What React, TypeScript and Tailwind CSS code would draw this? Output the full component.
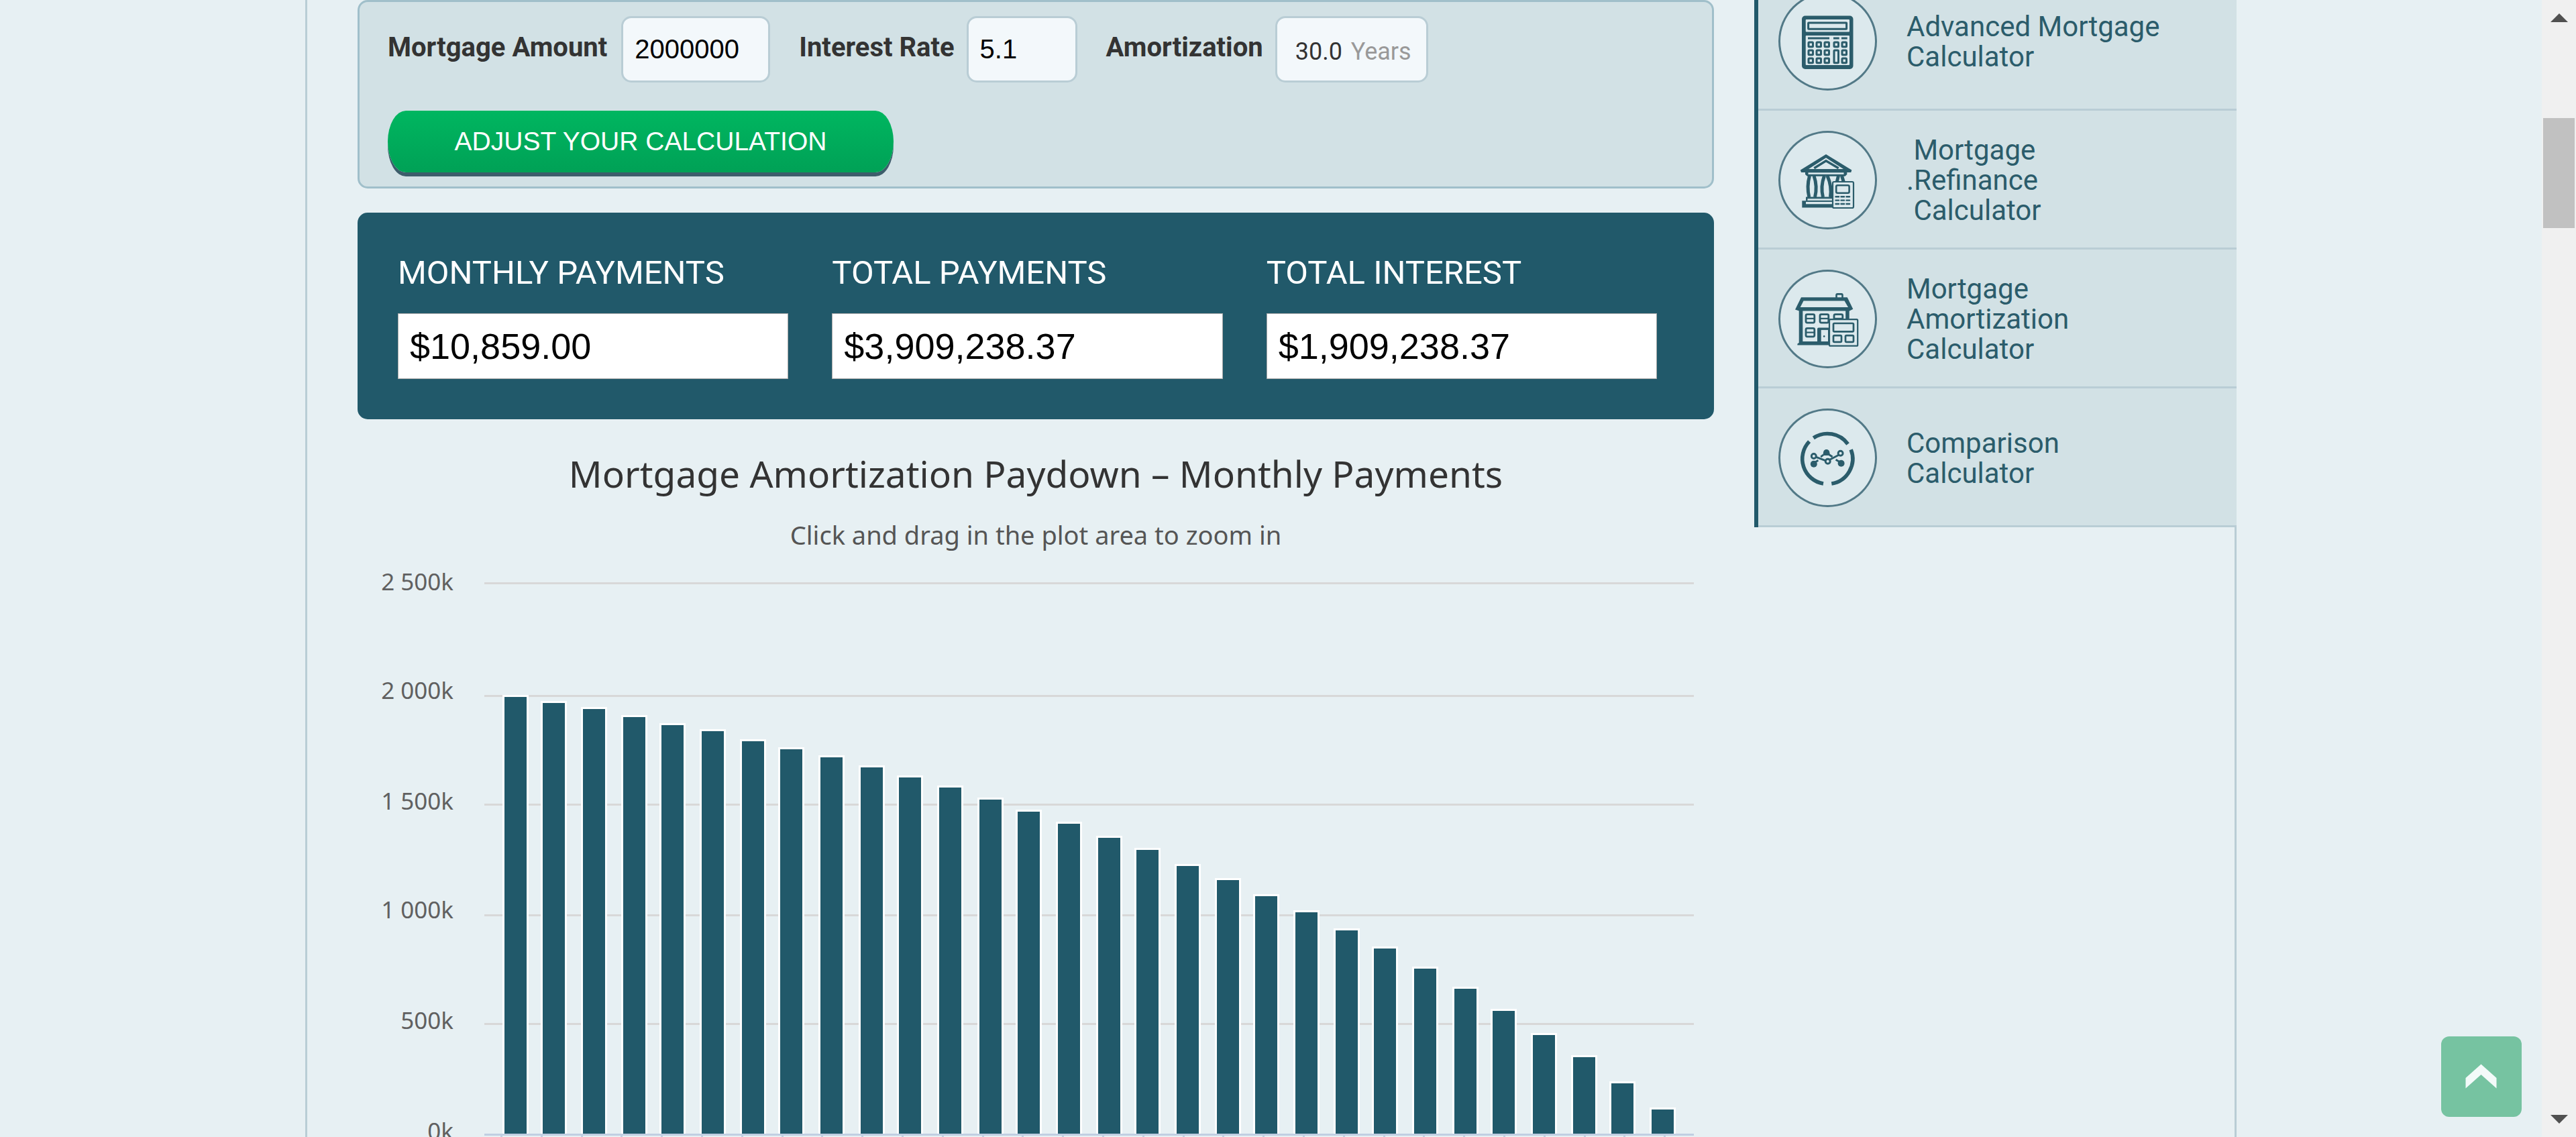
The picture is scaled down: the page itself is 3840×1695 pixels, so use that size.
import type { ReactNode } from "react";

const INK = "#2b5c6b";
const PAPER = "#dce9ed";

function CalculatorIcon() {
  const cols = [45, 57, 69, 83, 95];
  const rows = [75, 87, 99];
  return (
    <svg viewBox="0 0 147 147" className="h-full w-full" aria-hidden="true">
      <rect x="35" y="35.5" width="76.5" height="79.5" rx="5" fill={INK} />
      <rect x="40.7" y="41" width="65.3" height="18.5" rx="1" fill={PAPER} />
      <rect x="40.7" y="65" width="65.3" height="44" rx="1" fill={PAPER} />
      <g fill="none" stroke={INK} strokeWidth="3">
        <rect x="44.6" y="46" width="57" height="9.3" rx="0.5" />
        <path d="M44 69h32M82 69h8.7M94 69h8.7" strokeWidth="2.8" />
        {rows.map((y, r) =>
          cols.map((x, c) =>
            c === 3 && r > 0 ? null : <rect key={`${x}-${y}`} x={x} y={y} width="6.5" height="6.8" rx="1" />,
          ),
        )}
        <rect x="83" y="87" width="6.5" height="18.8" rx="1" />
      </g>
    </svg>
  );
}

function BankIcon() {
  return (
    <svg viewBox="0 0 147 147" className="h-full w-full" aria-hidden="true">
      <path d="M71 35 L109.3 58.6 L108.3 62 H34 L32.8 58.6 Z" fill={INK} />
      <path d="M71 40.3 L97 57 H45 Z" fill={PAPER} />
      <path d="M53.3 55.7 L71 44.8 L89.7 55.7" fill="none" stroke={INK} strokeWidth="3.4" />
      <path d="M40 62 H102.3 V65 L99.5 67.7 H43 L40 65 Z" fill={INK} />
      <rect x="44.5" y="62.3" width="53" height="2.6" fill={PAPER} />
      <g fill="none" stroke={INK} strokeWidth="5">
        <path d="M46.5 67 Q42 83 45.8 99" />
        <path d="M53 67 Q58.5 83 54.5 99" />
        <path d="M68.5 67 Q62.5 83 66.5 99" />
        <path d="M73 67 Q80 83 77.5 99" />
        <path d="M89.5 67 L87 77M94.5 67 L97.5 77" />
      </g>
      <path d="M41 98.5H82V104.5H41Z" fill={INK} />
      <path d="M43.5 101.2H82V103.8H43.5Z" fill={PAPER} />
      <path d="M35.3 104.3H82V114.6H35.3Z" fill={INK} />
      <path d="M41 106H82V109.3H41Z" fill={PAPER} />
      <rect x="81" y="76" width="31" height="39" rx="2" fill={PAPER} stroke={INK} strokeWidth="2.2" />
      <rect x="86.2" y="81.2" width="19.4" height="11.6" rx="2" fill="none" stroke={INK} strokeWidth="2.6" />
      <path
        d="M85.5 98.2h4.6M93.5 98.2h4.6M101.5 98.2h4.6M85.5 103.6h4.6M93.5 103.6h4.6M101.5 103.6h4.6M85.5 109h4.6M93.5 109h4.6M101.5 109h4.6"
        stroke={INK}
        strokeWidth="2.4"
        strokeLinecap="round"
      />
    </svg>
  );
}

function HouseIcon() {
  const windows = [
    [41, 66.7],
    [62, 66.7],
    [83, 66.7],
    [41, 87.4],
  ];
  return (
    <svg viewBox="0 0 147 147" className="h-full w-full" aria-hidden="true">
      <path d="M86.5 42V38q0-1.6 1.6-1.6h5.8q1.6 0 1.6 1.6V42" fill="none" stroke={INK} strokeWidth="2.6" />
      <path d="M34 41.2H102.7L111.3 58.7L106 61.6H31L25 59.4Z" fill={INK} />
      <path d="M37.5 46.6H98.5L104 56H32.7Z" fill={PAPER} />
      <path d="M30.7 61H36.3V107H78V112.6H28.4V110.5L30.7 109Z" fill={INK} />
      <path d="M100.2 61H105.7V76H100.2Z" fill={INK} />
      <g fill="none" stroke={INK} strokeWidth="2.8">
        {windows.map(([x, y]) => (
          <g key={`${x}-${y}`}>
            <rect x={x} y={y} width="12.8" height="12.4" rx="2" />
            <path d={`M${x} ${y + 6.2}h12.8`} strokeWidth="2.2" />
          </g>
        ))}
      </g>
      <path d="M58 108V88.5q0-2 2-2H76V108Z" fill={INK} />
      <path d="M63.7 107V89.9H74V107Z" fill={PAPER} />
      <circle cx="68.2" cy="99.4" r="1.3" fill={INK} />
      <rect x="76" y="74.2" width="42.2" height="39.5" rx="1.5" fill={PAPER} stroke={INK} strokeWidth="2.2" />
      <g fill="none" stroke={INK} strokeWidth="2.7">
        <rect x="82" y="80" width="30" height="12.3" rx="1.5" />
        <rect x="82" y="98.2" width="12" height="9.6" rx="1.5" />
        <rect x="100" y="98.2" width="12" height="9.6" rx="1.5" />
      </g>
    </svg>
  );
}

function ComparisonIcon() {
  return (
    <svg viewBox="0 0 147 147" className="h-full w-full" aria-hidden="true">
      <g fill="none" stroke={INK} strokeWidth="5.6">
        <path d="M79.3 112A37.5 37.5 0 0 0 108.2 61.3" />
        <path d="M103.6 53A37.5 37.5 0 0 0 52.3 43.9" />
        <path d="M46.1 49.1A37.5 37.5 0 0 0 67 112" />
      </g>
      <g fill={INK}>
        <path d="M71.7 61c3.4 0 4.6 2.4 4.8 5.6l.8 3.4h-11.2l.8-3.4c.2-3.2 1.400-5.600 4.800-5.600Z" />
        <circle cx="52.8" cy="82.7" r="5" />
        <circle cx="93.6" cy="81.7" r="5" />
      </g>
      <g fill="none" stroke={INK} strokeWidth="2.9">
        <path d="M67 69L63.2 72.2M76 69L80.6 72M54 80.5L59.4 77.2M92 80L85.6 76.2" />
        <path d="M56.3 72.3L70.2 77.7M76.6 76.2L90 69.3" />
        <circle cx="52.8" cy="71" r="3.5" />
        <circle cx="73.7" cy="78.7" r="3.5" />
        <circle cx="92.6" cy="66.7" r="3.5" />
      </g>
    </svg>
  );
}

const calculators: { label: string; icon: ReactNode }[] = [
  { label: "Advanced Mortgage\nCalculator", icon: <CalculatorIcon /> },
  { label: "\u00a0Mortgage\n.Refinance\n\u00a0Calculator", icon: <BankIcon /> },
  { label: "Mortgage\nAmortization\nCalculator", icon: <HouseIcon /> },
  { label: "Comparison\nCalculator", icon: <ComparisonIcon /> },
];

const results = [
  { id: "monthly", label: "MONTHLY PAYMENTS", value: "$10,859.00" },
  { id: "total", label: "TOTAL PAYMENTS", value: "$3,909,238.37" },
  { id: "interest", label: "TOTAL INTEREST", value: "$1,909,238.37" },
];

const gridLines = [
  { y: 47, text: 59, label: "2 500k" },
  { y: 215, text: 221, label: "2 000k" },
  { y: 377, text: 386, label: "1 500k" },
  { y: 542, text: 548, label: "1 000k" },
  { y: 704, text: 713, label: "500k" },
];

const AXIS_Y = 869;

const barTops = [
  215, 224, 233, 245, 257, 266, 281, 293, 305, 320, 335, 350, 368, 386, 404, 425, 443, 467, 488, 512, 536, 563, 590,
  620, 650, 683, 719, 752, 791, 830,
];

const barOffsets = [0, 57, 117];

function PaydownChart() {
  return (
    <svg
      viewBox="0 0 2022 920"
      className="block w-full font-['Noto_Sans',sans-serif]"
      role="img"
      aria-label="Remaining mortgage balance by year"
    >
      {gridLines.map((line) => (
        <g key={line.label}>
          <rect x="189" y={line.y} width="1803" height="3" fill="#d8d8d8" />
          <text x="143" y={line.text} fontSize="35" textAnchor="end" fill="#606060">
            {line.label}
          </text>
        </g>
      ))}
      <text x="143" y="878" fontSize="35" textAnchor="end" fill="#606060">
        0k
      </text>
      {barTops.map((top, i) => {
        const x = 216 + Math.floor(i / 3) * 177 + barOffsets[i % 3];
        return (
          <g key={i}>
            <rect x={x} y={top} width="39" height={AXIS_Y - top} fill="#ffffff" />
            <rect x={x + 3} y={top + 3} width="33" height={AXIS_Y - top - 3} fill="#21596a" />
          </g>
        );
      })}
      <rect x="189" y={AXIS_Y} width="1803" height="3" fill="#c0cfe2" />
      {barTops.map((_, i) => (
        <rect key={i} x={Math.round(213 + i * 59.8)} y={AXIS_Y + 3} width="3" height="15" fill="#c0cfe2" />
      ))}
    </svg>
  );
}

const fieldBox = "h-[99px] rounded-[15px] border-[3px] border-[#b9cdd5] bg-[#f3f8fb]";
const fieldLabel = "text-[40px] leading-[94px] font-bold text-[#333333]";

export default function App() {
  return (
    <div className="flex h-screen overflow-hidden bg-[#e7f0f3] font-[Roboto,sans-serif]">
      <div className="min-w-0 flex-1">
        <div className="mx-auto flex min-h-screen max-w-[2879px] gap-[60px] border-x-[3px] border-[#b9cdd5] pl-[75px]">
          <main className="min-w-0 flex-1">
            <form className="rounded-[15px] border-[3px] border-[#a0bfca] bg-[#d2e1e5] px-[42px] pt-[21px] pb-[21px]">
              <div className="flex flex-wrap gap-x-[43px]">
                <div className="flex gap-[21px]">
                  <label htmlFor="amount" className={fieldLabel}>
                    Mortgage Amount
                  </label>
                  <input
                    id="amount"
                    defaultValue="2000000"
                    className={`${fieldBox} w-[222px] px-[17px] font-['Liberation_Sans',sans-serif] text-[40px] text-black`}
                  />
                </div>
                <div className="flex gap-[18px]">
                  <label htmlFor="rate" className={fieldLabel}>
                    Interest Rate
                  </label>
                  <input
                    id="rate"
                    defaultValue="5.1"
                    className={`${fieldBox} w-[165px] px-[17px] font-['Liberation_Sans',sans-serif] text-[40px] text-black`}
                  />
                </div>
                <div className="flex gap-[18px]">
                  <label htmlFor="years" className={fieldLabel}>
                    Amortization
                  </label>
                  <div className={`${fieldBox} flex w-[228px] items-center pt-[6px] pl-[27px] text-[36px]`}>
                    <input id="years" defaultValue="30.0" className="w-[83px] text-[#333333]" />
                    <span className="text-[#999999]">Years</span>
                  </div>
                </div>
              </div>
              <button
                type="button"
                className="mt-[42px] block h-[92px] w-[754px] bg-linear-to-b from-[#00b660] to-[#00a156] font-['Liberation_Sans',sans-serif] text-[39px] text-white shadow-[0_6px_0_#3d5d6b] [border-radius:27px/46px]"
              >
                ADJUST YOUR CALCULATION
              </button>
            </form>

            <section className="mt-[36px] flex gap-[65px] rounded-[15px] bg-[#21596a] py-[60px] pr-[85px] pl-[60px]">
              {results.map((result) => (
                <div key={result.id} className="min-w-0 flex-1">
                  <label htmlFor={result.id} className="block text-[49px] leading-[60px] text-white">
                    {result.label}
                  </label>
                  <input
                    id={result.id}
                    readOnly
                    defaultValue={result.value}
                    className="mt-[30px] block h-[98px] w-full border border-[#a9a9a9] bg-white px-[17px] font-['Liberation_Sans',sans-serif] text-[54px] text-black"
                  />
                </div>
              ))}
            </section>

            <section className="pt-[51px] text-center font-['Noto_Sans',sans-serif]">
              <h2 className="text-[55px] leading-[60px] text-[#333333]">
                Mortgage Amortization Paydown – Monthly Payments
              </h2>
              <p className="mt-[37px] text-[38px] leading-[48px] text-[#555555]">
                Click and drag in the plot area to zoom in
              </p>
              <PaydownChart />
            </section>
          </main>

          <nav className="-mt-[42px] -mr-[3px] w-[719px] shrink-0 self-start border-l-[6px] border-[#21596a] bg-[#d2e1e5]">
            {calculators.map((item) => (
              <a
                key={item.label}
                href="#"
                className="flex h-[207px] items-start gap-[44px] border-b-[3px] border-[#b9cdd5] pt-[30px] pl-[30px]"
              >
                <span className="block size-[147px] shrink-0 rounded-full bg-[#dce9ed] shadow-[inset_0_0_0_3px_#527987]">
                  {item.icon}
                </span>
                <span className="flex h-[147px] items-center text-[42px] leading-[45px] whitespace-pre text-[#2b5c6b]">
                  {item.label}
                </span>
              </a>
            ))}
          </nav>
        </div>
      </div>

      <div className="flex w-[51px] shrink-0 flex-col items-center bg-[#f0f0f0] py-[20px]" aria-hidden="true">
        <svg viewBox="0 0 26 13" className="h-[13px] w-[26px] shrink-0">
          <path d="M13 0L26 13H0Z" fill="#505050" />
        </svg>
        <div className="mt-[143px] h-[164px] w-[47px] bg-[#c1c1c1]" />
        <svg viewBox="0 0 26 13" className="mt-auto h-[13px] w-[26px] shrink-0">
          <path d="M0 0H26L13 13Z" fill="#505050" />
        </svg>
      </div>

      <button
        type="button"
        aria-label="Back to top"
        className="fixed right-[81px] bottom-[30px] size-[120px] rounded-[12px] bg-[#76c3a1]"
      >
        <svg viewBox="0 0 120 120" className="h-full w-full">
          <path d="M36.5 62L59.5 41.5L82.5 62V77.5L59.5 57L36.5 77.5Z" fill="#f3faf9" />
        </svg>
      </button>
    </div>
  );
}
